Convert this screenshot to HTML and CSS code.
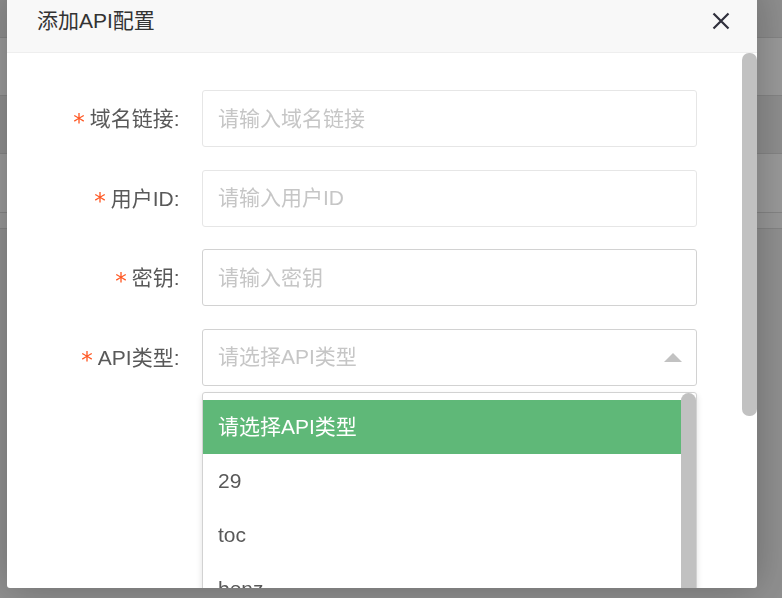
FILE: index.html
```html
<!DOCTYPE html>
<html lang="zh-CN">
<head>
<meta charset="utf-8">
<title>添加API配置</title>
<link rel="stylesheet" href="styles.css">
</head>
<body>
<div class="page">
  <div class="prow dark h37"></div>
  <div class="prow light h58"></div>
  <div class="prow dark h58"></div>
  <div class="prow light h59"></div>
  <div class="prow mid h16"></div>
  <div class="prow dark fill"></div>
</div>
<div class="shade"></div>
<div class="modal">
  <div class="modal-head">
    <span class="title">添加API配置</span>
    <span class="close">
      <svg width="18" height="18" viewBox="0 0 18 18"><path d="M1.5 1.5L16.5 16.5M16.5 1.5L1.5 16.5" stroke="#2f2f3c" stroke-width="2.2" stroke-linecap="butt" fill="none"/></svg>
    </span>
  </div>
  <div class="modal-body">
    <div class="content">
      <form class="form">
        <div class="item">
          <label class="label"><span class="req">*</span>域名链接:</label>
          <div class="block"><input class="input" type="text" placeholder="请输入域名链接"></div>
        </div>
        <div class="item">
          <label class="label"><span class="req">*</span>用户ID:</label>
          <div class="block"><input class="input" type="text" placeholder="请输入用户ID"></div>
        </div>
        <div class="item">
          <label class="label"><span class="req">*</span>密钥:</label>
          <div class="block"><input class="input hover" type="text" placeholder="请输入密钥"></div>
        </div>
        <div class="item">
          <label class="label"><span class="req">*</span>API类型:</label>
          <div class="block select">
            <input class="input hover" type="text" readonly placeholder="请选择API类型">
            <i class="arrow"></i>
            <div class="dropdown">
              <div class="options">
                <div class="opt on">请选择API类型</div>
                <div class="opt">29</div>
                <div class="opt">toc</div>
                <div class="opt">benz</div>
                <div class="opt">test</div>
              </div>
              <div class="dd-bar"><div class="dd-thumb"></div></div>
            </div>
          </div>
        </div>
      </form>
    </div>
    <div class="track"><div class="thumb"></div></div>
  </div>
</div>
</body>
</html>
```
FILE: styles.css
```css
html, body {
  margin: 0;
  padding: 0;
  height: 100%;
  overflow: hidden;
}
body {
  font-family: "Liberation Sans", Arial, "Noto Sans CJK SC", sans-serif;
  font-size: 21px;
  color: #595959;
  background: #ffffff;
}

/* page behind the shade */
.page {
  display: flex;
  flex-direction: column;
  height: 100%;
}
.prow { border-bottom: 1px solid #dcdcdc; }
.dark { background: #ececec; }
.light { background: #ffffff; }
.mid { background: #fbfbfb; }
.h37 { height: 37px; }
.h58 { height: 57px; }
.h59 { height: 58px; }
.h16 { height: 15px; }
.fill { flex: 1; border-bottom: 0; background: #efefef; }

.shade {
  position: fixed;
  inset: 0;
  background: rgba(0, 0, 0, 0.4);
}

/* modal */
.modal {
  position: fixed;
  left: 7px;
  top: -11px;
  width: 750px;
  height: 599px;
  background: #ffffff;
  border-radius: 3px;
  box-shadow: 1px 1px 40px rgba(0, 0, 0, 0.25);
  display: flex;
  flex-direction: column;
  overflow: hidden;
}
.modal-head {
  height: 63px;
  flex: 0 0 auto;
  background: #f8f8f8;
  border-bottom: 1px solid #eeeeee;
  display: flex;
  align-items: center;
  justify-content: space-between;
  padding: 0 27px 0 30px;
}
.title {
  color: #333333;
  font-size: 21px;
  line-height: 1;
}
.close {
  display: flex;
  width: 18px;
  height: 18px;
  margin-top: 1px;
}

.modal-body {
  flex: 1;
  display: flex;
  min-height: 0;
}
.content {
  flex: 1;
  overflow: hidden;
  padding: 37px 0 0 30px;
}
.track {
  width: 15px;
  flex: 0 0 15px;
}
.thumb {
  height: 363px;
  background: #c1c1c1;
  border-radius: 7px;
}

/* form */
.form {
  display: flex;
  flex-direction: column;
  gap: 22.5px;
  margin: 0;
}
.item {
  display: flex;
  align-items: center;
  height: 57px;
}
.label {
  width: 165px;
  flex: 0 0 165px;
  box-sizing: border-box;
  padding-right: 22.5px;
  display: flex;
  justify-content: flex-end;
  align-items: center;
  color: #595959;
  line-height: 1;
}
.req {
  color: #ff5722;
  font-family: "DejaVu Sans", sans-serif;
  font-size: 23px;
  margin-right: 5px;
  margin-top: 7px;
}
.block {
  width: 495px;
  flex: 0 0 495px;
  position: relative;
}
.input {
  display: block;
  box-sizing: border-box;
  width: 100%;
  height: 57px;
  margin: 0;
  padding: 0 15px;
  border: 1px solid #e6e6e6;
  border-radius: 3px;
  background: #ffffff;
  font-family: "Liberation Sans", Arial, "Noto Sans CJK SC", sans-serif;
  font-size: 21px;
  color: #333333;
  outline: none;
}
.input.hover { border-color: #d2d2d2; }
.input::placeholder { color: #c6c6c6; }

.arrow {
  position: absolute;
  right: 15px;
  top: 24px;
  width: 0;
  height: 0;
  border-left: 9px solid transparent;
  border-right: 9px solid transparent;
  border-bottom: 9px solid #c2c2c2;
}

.dropdown {
  position: absolute;
  left: 0;
  right: 0;
  top: 63px;
  height: 450px;
  box-sizing: border-box;
  border: 1px solid #d2d2d2;
  border-radius: 3px;
  background: #ffffff;
  box-shadow: 0 3px 6px rgba(0, 0, 0, 0.12);
  display: flex;
  z-index: 5;
}
.options {
  flex: 1;
  padding: 7px 0;
}
.opt {
  height: 54px;
  line-height: 54px;
  padding: 0 15px;
  color: #595959;
  white-space: nowrap;
}
.opt.on {
  background: #5fb878;
  color: #ffffff;
}
.dd-bar {
  width: 15px;
  flex: 0 0 15px;
}
.dd-thumb {
  height: 300px;
  background: #c1c1c1;
  border-radius: 8px 8px 0 0;
}
```
